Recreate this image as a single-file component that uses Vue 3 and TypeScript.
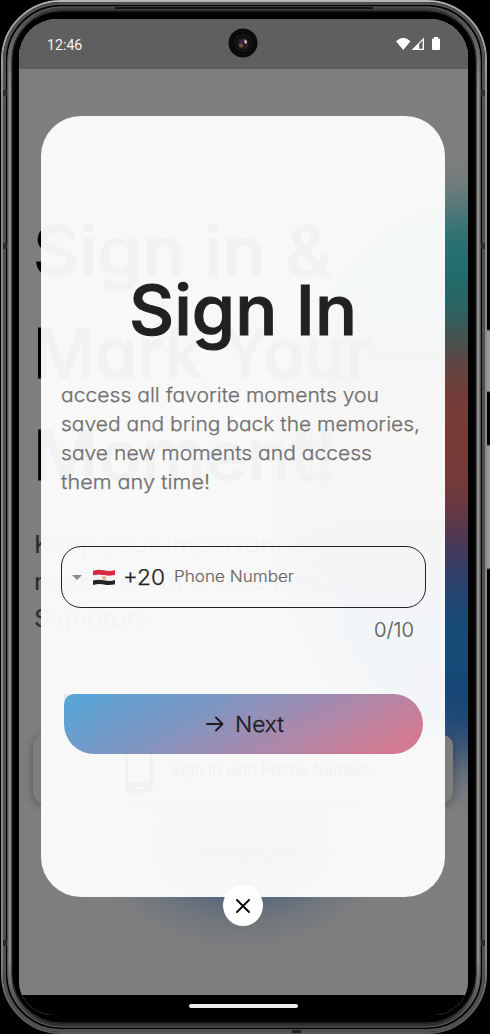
<script setup lang="ts">
import { h, type FunctionalComponent } from 'vue'

interface LineProps {
  text: string
  width: number
  height: number
  baseline: number
}

// One line of text, fitted to a fixed advance width.
const Line: FunctionalComponent<LineProps> = (p) =>
  h('svg', { class: 'line', width: p.width, height: p.height }, [
    h('text', { x: 0, y: p.baseline, textLength: p.width, lengthAdjust: 'spacingAndGlyphs' }, p.text),
  ])
Line.props = ['text', 'width', 'height', 'baseline']

const heroLines = [
  { text: 'Sign in &', width: 299 },
  { text: 'Mark Your', width: 339 },
  { text: 'Moment!', width: 304 },
]
const leadLines = [
  { text: 'Keep your important events and', width: 392 },
  { text: 'memories in a safe place with', width: 364 },
  { text: 'Signature', width: 116 },
]
const description = [
  { text: 'access all favorite moments you', width: 318 },
  { text: 'saved and bring back the memories,', width: 359 },
  { text: 'save new moments and access', width: 311 },
  { text: 'them any time!', width: 149 },
]
</script>

<template>
  <div class="stage">
    <svg class="frame" width="490" height="1034" viewBox="0 0 490 1034" fill="none">
      <defs>
        <linearGradient id="rim" x1="0" y1="0" x2="0" y2="1034" gradientUnits="userSpaceOnUse">
          <stop offset="0" stop-color="#b4b4b4" />
          <stop offset=".1" stop-color="#8a8a8a" />
          <stop offset=".92" stop-color="#858585" />
          <stop offset="1" stop-color="#555" />
        </linearGradient>
        <linearGradient id="inner" x1="0" y1="0" x2="0" y2="1034" gradientUnits="userSpaceOnUse">
          <stop offset="0" stop-color="#303030" />
          <stop offset=".02" stop-color="#505050" />
          <stop offset=".08" stop-color="#8c8c8c" />
          <stop offset=".93" stop-color="#8c8c8c" />
          <stop offset=".98" stop-color="#404040" />
          <stop offset="1" stop-color="#222" />
        </linearGradient>
      </defs>
      <rect x="485" y="330" width="8" height="62" fill="#999" stroke="#333" />
      <rect x="485" y="445" width="8" height="124" fill="#999" stroke="#333" />
      <rect x="1" y="0" width="486" height="1034" rx="60" fill="#000" />
      <rect x="2" y="1" width="484" height="1032" rx="59" stroke="url(#rim)" stroke-width="2" />
      <rect x="4.500" y="3.500" width="479" height="1027" rx="56" stroke="#505050" stroke-width="3" />
      <rect x="9.500" y="8.500" width="469" height="1017" rx="51.500" stroke="url(#inner)" stroke-width="4" />
      <rect x="8" y="7" width="472" height="1020" rx="53" stroke="#5f5f5f" stroke-width="1" />
      <rect x="12" y="11" width="464" height="1012" rx="49" stroke="#333" stroke-width="1" />
      <path d="M3 93h4M481 93h4M3 943h4M481 943h4M3 246h4M481 246h4" stroke="#2c2c2c" stroke-width="6" />
      <path d="M115 8h258" stroke="#111" stroke-width="2" />
      <path d="M292 1031.500h9" stroke="#222" stroke-width="3" />
    </svg>

    <div class="screen">
      <div class="page">
        <div class="blob side"></div>
        <div class="blob bottom"></div>
        <div class="hero">
          <Line v-for="l in heroLines" :key="l.text" v-bind="l" :height="102" :baseline="76" />
        </div>
        <div class="lead">
          <Line v-for="l in leadLines" :key="l.text" v-bind="l" :height="37" :baseline="26" />
        </div>
        <div class="phone-button">
          <svg width="28" height="48" viewBox="0 0 28 48">
            <path fill-rule="evenodd" d="M5 0h18a5 5 0 0 1 5 5v38a5 5 0 0 1-5 5H5a5 5 0 0 1-5-5V5a5 5 0 0 1 5-5ZM3.500 8v29h21V8ZM9 42v2h10v-2Z" />
          </svg>
          <Line text="Sign in with Phone Number" :width="201" :height="24" :baseline="18" />
        </div>
        <div class="signup">
          <Line text="Don't have an account?" :width="178" :height="34" :baseline="18" />
          <Line text="Register now." :width="94" :height="34" :baseline="18" />
        </div>
      </div>
      <div class="scrim"></div>

      <div class="ui">
        <header class="status">
          <span class="clock">12:46</span>
          <svg class="signals" width="46" height="16" viewBox="0 0 46 16">
            <path d="M1 5.200Q8.200-1.800 15.500 5.200L8.200 14Z" fill="#fff" />
            <path d="M29 1.500V14H16.500Z" fill="#fff" />
            <path d="M24.200 7.700L27.600 4.500V12.700H24.200Z" fill="#606060" />
            <path d="M39 1h4v1.500h1.200q.8 0 .8.800v10q0 .8-.8.800h-6.400q-.8 0-.8-.8v-10q0-.8.800-.8H39Z" fill="#fff" />
          </svg>
          <svg class="camera" width="30" height="30" viewBox="0 0 30 30">
            <circle cx="15" cy="15" r="14.500" fill="#0b0b0b" />
            <circle cx="15" cy="15" r="8.500" fill="#101010" stroke="#222" stroke-width=".6" />
            <circle cx="15" cy="15.500" r="5.500" fill="#2b2024" />
            <circle cx="13" cy="17.500" r="2" fill="#6b5142" />
            <circle cx="13.500" cy="14" r="1.800" fill="#452c58" />
            <path d="M16 11.500q3.500 0 3 3.500l-2 1Z" fill="#c290ab" />
            <circle cx="17.500" cy="14" r=".8" fill="#fff" />
          </svg>
        </header>

        <main class="card">
          <h1 class="title"><Line text="Sign In" :width="228" :height="84" :baseline="61" /></h1>
          <div class="description">
            <Line v-for="l in description" :key="l.text" v-bind="l" :height="29" :baseline="21" />
          </div>
          <div class="field">
            <svg class="caret" width="10" height="5" viewBox="0 0 10 5"><path d="M0 0h10L5 5Z" fill="#8b8b8b" /></svg>
            <svg class="flag" width="22" height="17" viewBox="0 0 22 17">
              <path d="M0 2Q5 0 11 1.300T22 1V6Q16 7.300 11 6.300T0 6.500Z" fill="#d82b43" />
              <path d="M0 6.500Q5 5 11 6.300T22 6V11Q16 12.300 11 11.300T0 11.500Z" fill="#f2f2f2" />
              <path d="M0 11.500Q5 10 11 11.300T22 11V15.300Q16 16.700 11 15.500T0 15.900Z" fill="#232323" />
              <path d="M9 7l2 .8L13 7l-.5 3.500h-3Z" fill="#d2b36c" />
            </svg>
            <Line class="code" text="+20" :width="42" :height="30" :baseline="23" />
            <Line class="placeholder" text="Phone Number" :width="120" :height="30" :baseline="20" />
          </div>
          <div class="counter"><Line text="0/10" :width="40" :height="28" :baseline="21" /></div>
          <div class="next-wrap">
            <button class="next" type="button">
              <svg width="18" height="16" viewBox="0 0 18 16" fill="none" stroke="#1c1b20" stroke-width="1.900" stroke-linecap="round" stroke-linejoin="round">
                <path d="M1 8h15.500M10 1.500L16.500 8l-6.500 6.500" />
              </svg>
              <Line text="Next" :width="49" :height="30" :baseline="23" />
            </button>
          </div>
          <button class="close" type="button" aria-label="Close">
            <svg width="14" height="14" viewBox="0 0 14 14" stroke="#000" stroke-width="1.800" stroke-linecap="round">
              <path d="M1 1l12 12M13 1L1 13" />
            </svg>
          </button>
        </main>

        <footer class="nav"><i></i></footer>
      </div>
    </div>
  </div>
</template>

<style>
html,
body {
  margin: 0;
  background: #000;
}
svg.line {
  display: block;
  overflow: visible;
  flex: none;
}
</style>

<style scoped>
.stage {
  position: relative;
  width: 490px;
  height: 1034px;
  box-sizing: border-box;
  padding: 19px 22px 0 19px;
  overflow: hidden;
  background: #000;
  font-family: Inter, 'Noto Sans', sans-serif;
  font-feature-settings: 'cv11';
}
.frame {
  position: absolute;
  inset: 0;
}
.screen {
  position: relative;
  width: 449px;
  height: 996px;
  border-radius: 38px 38px 34px 34px;
  overflow: hidden;
  background: #fff;
}
.page,
.scrim,
.ui {
  position: absolute;
  inset: 0;
}
.page {
  display: flex;
  flex-direction: column;
}
.scrim {
  background: rgba(0, 0, 0, 0.505);
}
.blob {
  position: absolute;
  border-radius: 50%;
}
.side {
  left: 270px;
  top: 190px;
  width: 400px;
  height: 550px;
  border-radius: 45%;
  filter: blur(28px);
  background: linear-gradient(#3ee0e0 0 16%, #5cbcb8 20%, #f0786f 31% 52%, #c56e90 57%, #7869c8 63%, #2aa0f0 73%, #2b93f0 85%, #3c80e6 100%);
}
.bottom {
  left: 132px;
  top: 775px;
  width: 180px;
  height: 100px;
  filter: blur(32px);
  background: #4a96ec;
}
.hero {
  position: relative;
  margin: 181px 0 0 14px;
  font-size: 69px;
  font-weight: 500;
  stroke: #000;
  stroke-width: 1px;
}
.lead {
  position: relative;
  margin: 21px 0 0 15px;
  font-size: 24px;
  fill: #555;
}
.phone-button {
  position: relative;
  box-sizing: border-box;
  width: 420px;
  height: 68px;
  margin: 97px 0 0 14px;
  padding-left: 92px;
  display: flex;
  align-items: center;
  gap: 18px;
  border-radius: 11px;
  background: #fff;
  box-shadow: 0 2px 10px rgba(0, 0, 0, 0.35);
  font-size: 16px;
  font-weight: 500;
}
.signup {
  position: relative;
  display: flex;
  flex-direction: column;
  align-items: center;
  margin-top: 38px;
  font-size: 16px;
  fill: #666;
}
.ui {
  display: flex;
  flex-direction: column;
}
.status {
  position: relative;
  height: 50px;
  box-sizing: border-box;
  padding: 0 27px 0 28px;
  display: flex;
  align-items: center;
  justify-content: space-between;
  background: #5f5f5f;
}
.clock {
  margin-top: 2px;
  font: 14.2px/20px Roboto, sans-serif;
  color: #f3f3f3;
}
.signals {
  margin-top: -1px;
}
.camera {
  position: absolute;
  left: 209px;
  top: 9px;
}
.card {
  position: relative;
  box-sizing: border-box;
  width: 404px;
  height: 781px;
  margin: 47px 0 0 22px;
  padding: 158px 19px 0 20px;
  border-radius: 40px;
  background: rgba(255, 255, 255, 0.948);
}
.title {
  margin: 0 0 0 68px;
  font-size: 69px;
  font-weight: 500;
  fill: #212121;
  stroke: #212121;
  stroke-width: 1.1px;
}
.description {
  margin-top: 23px;
  font-size: 20px;
  font-weight: 300;
  fill: #707070;
  stroke: #707070;
  stroke-width: 0.25px;
}
.field {
  box-sizing: border-box;
  width: 365px;
  height: 62px;
  margin-top: 49px;
  padding-left: 10px;
  display: flex;
  align-items: center;
  border: 1px solid #222;
  border-radius: 20px;
}
.flag {
  margin-left: 11px;
}
.code {
  margin-left: 8px;
  font-size: 22px;
  font-weight: 300;
  fill: #222;
  stroke: #222;
  stroke-width: 0.25px;
}
.placeholder {
  margin-left: 9px;
  font-size: 15.5px;
  font-weight: 300;
  fill: #666;
  stroke: #666;
  stroke-width: 0.15px;
}
.counter {
  display: flex;
  justify-content: flex-end;
  padding: 8px 12px 0 0;
  font-size: 20px;
  font-weight: 300;
  fill: #606060;
  stroke: #606060;
  stroke-width: 0.2px;
}
.next-wrap {
  width: 359px;
  height: 60px;
  margin: 50px 0 0 3px;
  background: linear-gradient(#e8e8e8, #e8e8e8) 0 0 / 7px 7px no-repeat;
}
.next {
  width: 359px;
  height: 60px;
  box-sizing: border-box;
  padding: 0 0 0 3px;
  display: flex;
  align-items: center;
  justify-content: center;
  gap: 11px;
  border: 0;
  border-radius: 10px 30px 30px 30px;
  background: linear-gradient(152deg, #5aa5d6 5%, #8096c2 37%, #a58aae 60%, #d27b90 91%);
  font-family: inherit;
  font-feature-settings: inherit;
  font-size: 22px;
  font-weight: 300;
  fill: #1c1b20;
}
.next .line {
  stroke: #1c1b20;
  stroke-width: 0.3px;
}
.close {
  position: absolute;
  left: 182px;
  bottom: -29px;
  width: 40px;
  height: 41px;
  padding: 0;
  display: grid;
  place-items: center;
  border: 0;
  border-radius: 50%;
  background: #fff;
}
.nav {
  flex: 1;
  margin-top: 98px;
  background: #000;
  display: flex;
  justify-content: center;
}
.nav i {
  width: 109px;
  height: 4px;
  margin-top: 9px;
  border-radius: 2px;
  background: #ededed;
}
</style>
